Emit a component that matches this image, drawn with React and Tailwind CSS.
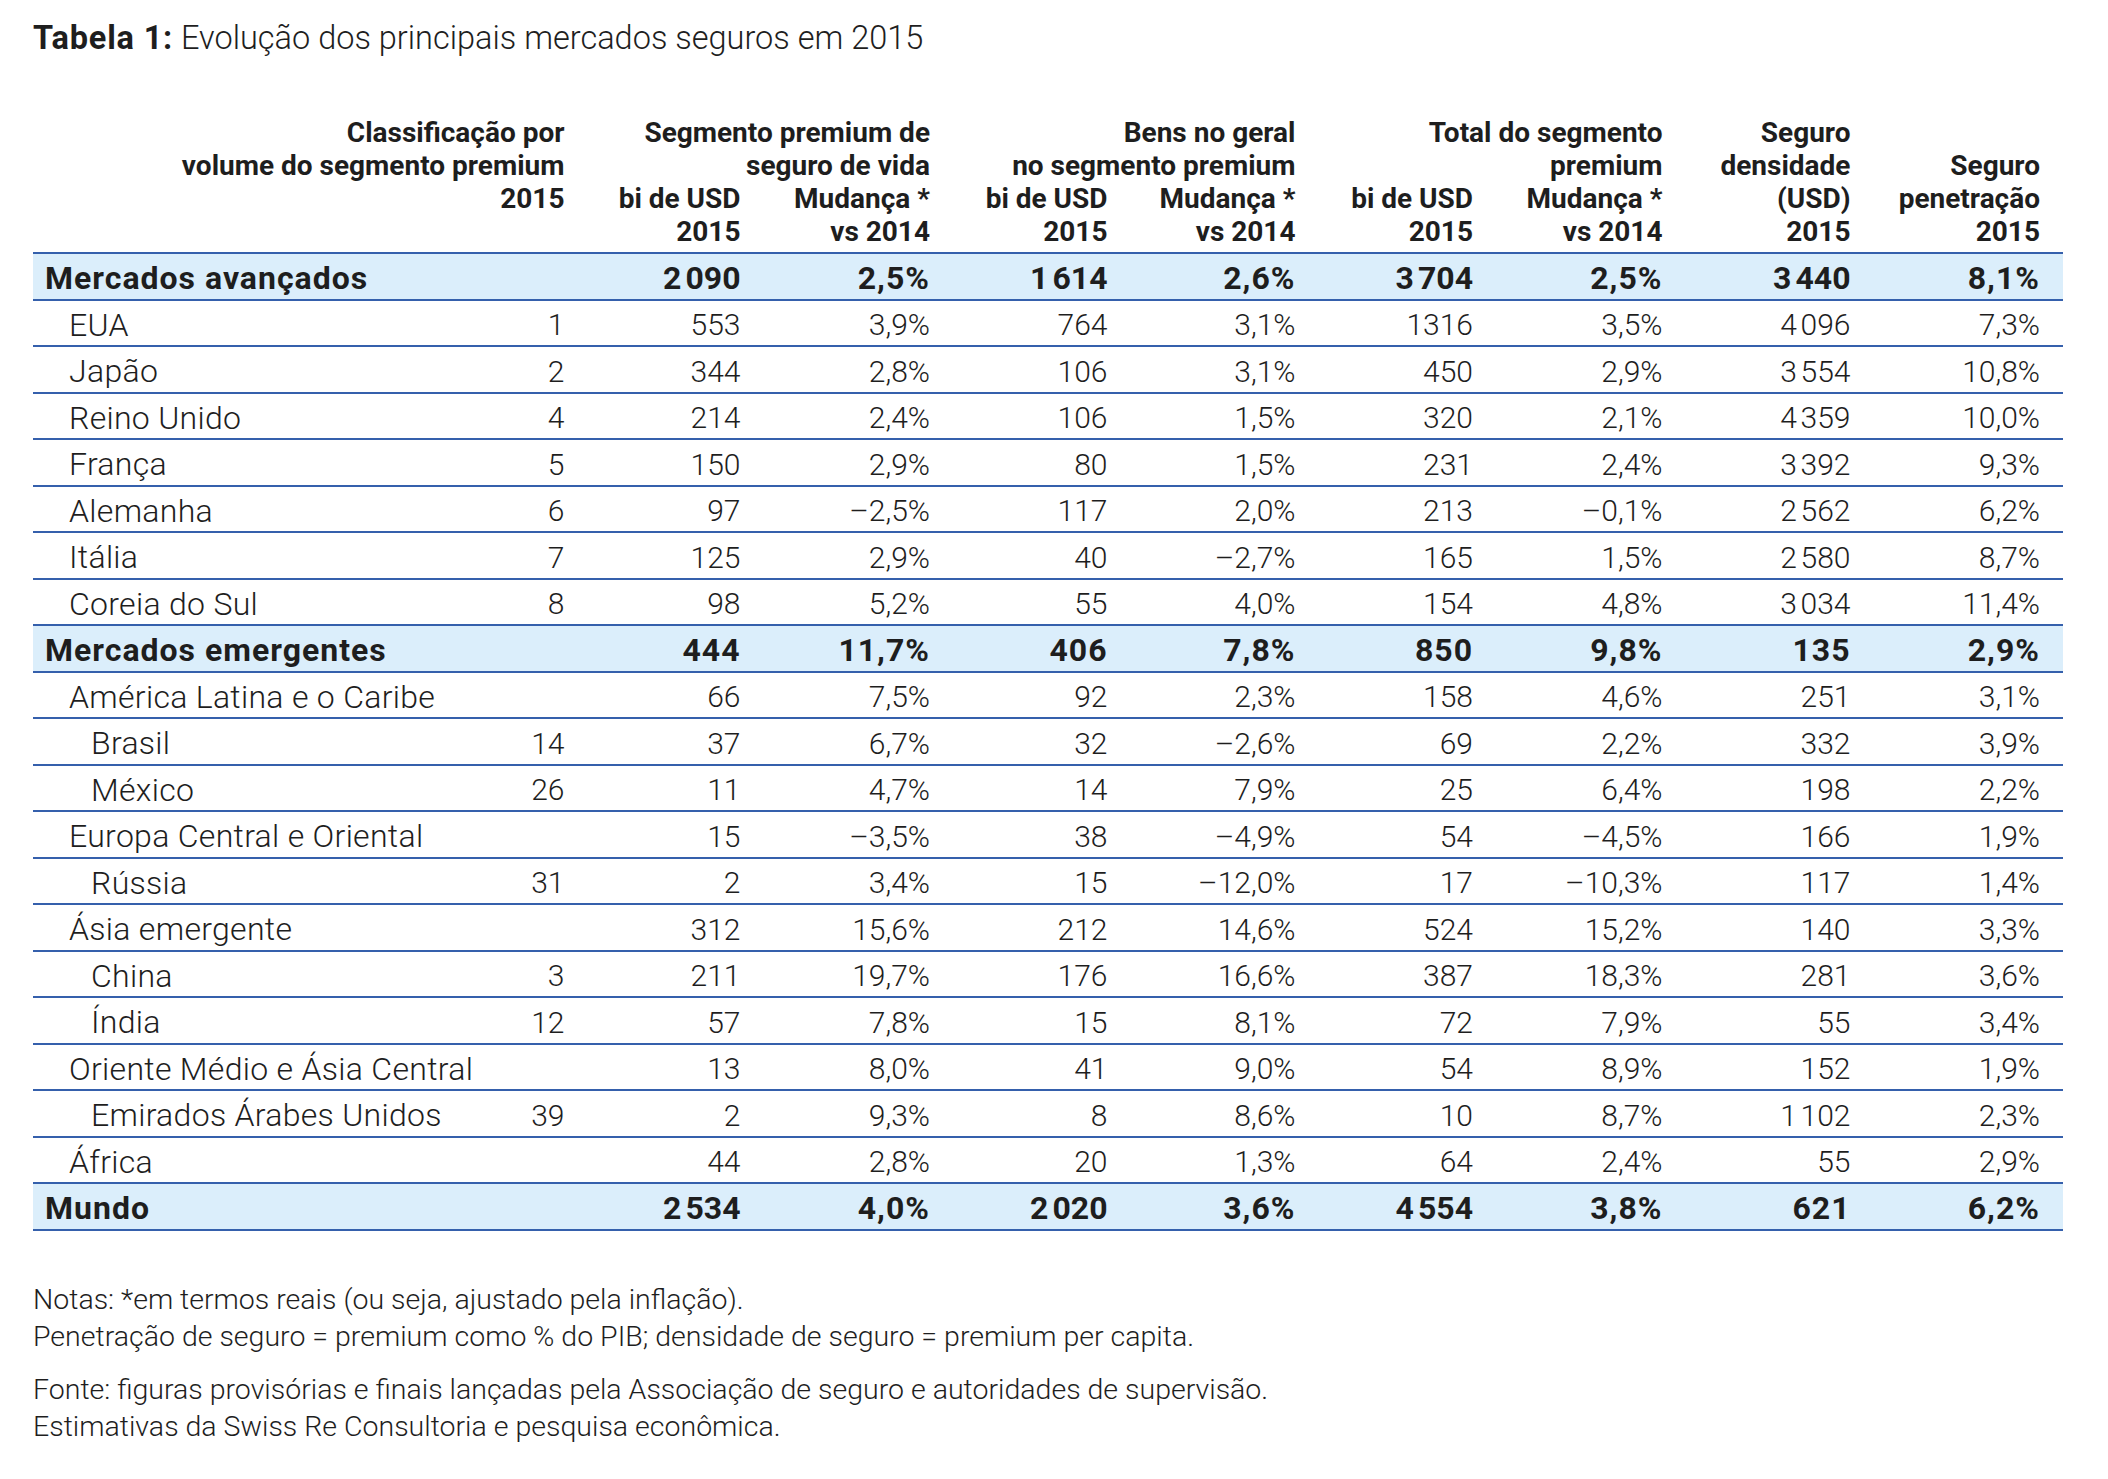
import React from "react";

const S = "\u202F";

const rows = [
  { l: "Mercados avançados", lvl: 0, hl: true, r: "", v: [`2${S}090`, "2,5%", `1${S}614`, "2,6%", `3${S}704`, "2,5%", `3${S}440`, "8,1%"] },
  { l: "EUA", lvl: 1, r: "1", v: ["553", "3,9%", "764", "3,1%", "1316", "3,5%", `4${S}096`, "7,3%"] },
  { l: "Japão", lvl: 1, r: "2", v: ["344", "2,8%", "106", "3,1%", "450", "2,9%", `3${S}554`, "10,8%"] },
  { l: "Reino Unido", lvl: 1, r: "4", v: ["214", "2,4%", "106", "1,5%", "320", "2,1%", `4${S}359`, "10,0%"] },
  { l: "França", lvl: 1, r: "5", v: ["150", "2,9%", "80", "1,5%", "231", "2,4%", `3${S}392`, "9,3%"] },
  { l: "Alemanha", lvl: 1, r: "6", v: ["97", "–2,5%", "117", "2,0%", "213", "–0,1%", `2${S}562`, "6,2%"] },
  { l: "Itália", lvl: 1, r: "7", v: ["125", "2,9%", "40", "–2,7%", "165", "1,5%", `2${S}580`, "8,7%"] },
  { l: "Coreia do Sul", lvl: 1, r: "8", v: ["98", "5,2%", "55", "4,0%", "154", "4,8%", `3${S}034`, "11,4%"] },
  { l: "Mercados emergentes", lvl: 0, hl: true, r: "", v: ["444", "11,7%", "406", "7,8%", "850", "9,8%", "135", "2,9%"] },
  { l: "América Latina e o Caribe", lvl: 1, r: "", v: ["66", "7,5%", "92", "2,3%", "158", "4,6%", "251", "3,1%"] },
  { l: "Brasil", lvl: 2, r: "14", v: ["37", "6,7%", "32", "–2,6%", "69", "2,2%", "332", "3,9%"] },
  { l: "México", lvl: 2, r: "26", v: ["11", "4,7%", "14", "7,9%", "25", "6,4%", "198", "2,2%"] },
  { l: "Europa Central e Oriental", lvl: 1, r: "", v: ["15", "–3,5%", "38", "–4,9%", "54", "–4,5%", "166", "1,9%"] },
  { l: "Rússia", lvl: 2, r: "31", v: ["2", "3,4%", "15", "–12,0%", "17", "–10,3%", "117", "1,4%"] },
  { l: "Ásia emergente", lvl: 1, r: "", v: ["312", "15,6%", "212", "14,6%", "524", "15,2%", "140", "3,3%"] },
  { l: "China", lvl: 2, r: "3", v: ["211", "19,7%", "176", "16,6%", "387", "18,3%", "281", "3,6%"] },
  { l: "Índia", lvl: 2, r: "12", v: ["57", "7,8%", "15", "8,1%", "72", "7,9%", "55", "3,4%"] },
  { l: "Oriente Médio e Ásia Central", lvl: 1, r: "", v: ["13", "8,0%", "41", "9,0%", "54", "8,9%", "152", "1,9%"] },
  { l: "Emirados Árabes Unidos", lvl: 2, r: "39", v: ["2", "9,3%", "8", "8,6%", "10", "8,7%", `1${S}102`, "2,3%"] },
  { l: "África", lvl: 1, r: "", v: ["44", "2,8%", "20", "1,3%", "64", "2,4%", "55", "2,9%"] },
  { l: "Mundo", lvl: 0, hl: true, r: "", v: [`2${S}534`, "4,0%", `2${S}020`, "3,6%", `4${S}554`, "3,8%", "621", "6,2%"] },
];

const indent = ["pl-[12px]", "pl-[36px]", "pl-[58px]"];

const cols = "grid grid-cols-[427px_104.5px_176px_189.5px_177.5px_188px_177.5px_189.5px_188px_212.5px]";

function Row({ row }) {
  const num = row.hl ? "font-bold text-[32px] tracking-[1px]" : "font-light text-[30px]";
  const label = row.hl ? "font-bold text-[32px] tracking-[1px]" : "font-light text-[32px] tracking-[0.3px]";
  return (
    <div className={`${cols} h-[46.5px] items-center border-b-2 border-[#3560ac] ${row.hl ? "bg-[#dbeefb]" : ""}`}>
      <div className={`${indent[row.lvl]} ${label} whitespace-nowrap`}>{row.l}</div>
      <div className={`${num} text-right`}>{row.r}</div>
      {row.v.map((v, i) => (
        <div key={i} className={`${num} text-right whitespace-nowrap ${i === 7 ? "pr-[23px]" : ""}`}>
          {v}
        </div>
      ))}
    </div>
  );
}

function Head() {
  return (
    <div className={`${cols} grid-rows-[33px_33px_33px_33px] text-[28px] font-bold leading-[33px] text-[#1e1e1e]`}>
      <div className="col-start-1 col-span-2 row-start-1 row-span-3 text-right">
        Classificação por<br />volume do segmento premium<br />2015
      </div>
      <div className="col-start-3 col-span-2 row-start-1 row-span-2 text-right">
        Segmento premium de<br />seguro de vida
      </div>
      <div className="col-start-3 row-start-3 row-span-2 text-right">bi de USD<br />2015</div>
      <div className="col-start-4 row-start-3 row-span-2 text-right">Mudança *<br />vs 2014</div>
      <div className="col-start-5 col-span-2 row-start-1 row-span-2 text-right">
        Bens no geral<br />no segmento premium
      </div>
      <div className="col-start-5 row-start-3 row-span-2 text-right">bi de USD<br />2015</div>
      <div className="col-start-6 row-start-3 row-span-2 text-right">Mudança *<br />vs 2014</div>
      <div className="col-start-7 col-span-2 row-start-1 row-span-2 text-right">
        Total do segmento<br />premium
      </div>
      <div className="col-start-7 row-start-3 row-span-2 text-right">bi de USD<br />2015</div>
      <div className="col-start-8 row-start-3 row-span-2 text-right">Mudança *<br />vs 2014</div>
      <div className="col-start-9 row-start-1 row-span-4 text-right">
        Seguro<br />densidade<br />(USD)<br />2015
      </div>
      <div className="col-start-10 row-start-2 row-span-3 text-right pr-[23px]">
        Seguro<br />penetração<br />2015
      </div>
    </div>
  );
}

export default function App() {
  return (
    <div className="w-[2108px] h-[1479px] bg-white px-[33px] pt-[18px] text-[#1e1e1e] font-['Roboto',sans-serif]">
      <h1 className="text-[32.5px] leading-[40px] font-light">
        <span className="font-bold tracking-[0.8px]">Tabela 1:</span> Evolução dos principais mercados seguros em 2015
      </h1>

      <div className="mt-[58px] w-[2030px]">
        <Head />
      </div>

      <div className="mt-[4px] w-[2030px] border-t-2 border-[#3560ac]">
        {rows.map((row) => (
          <Row key={row.l} row={row} />
        ))}
      </div>

      <div className="mt-[50px] text-[28.5px] font-light leading-[37.5px]">
        <p>Notas: *em termos reais (ou seja, ajustado pela inflação).</p>
        <p>Penetração de seguro = premium como % do PIB; densidade de seguro = premium per capita.</p>
        <p className="mt-[15px]">Fonte: figuras provisórias e finais lançadas pela Associação de seguro e autoridades de supervisão.</p>
        <p>Estimativas da Swiss Re Consultoria e pesquisa econômica.</p>
      </div>
    </div>
  );
}
